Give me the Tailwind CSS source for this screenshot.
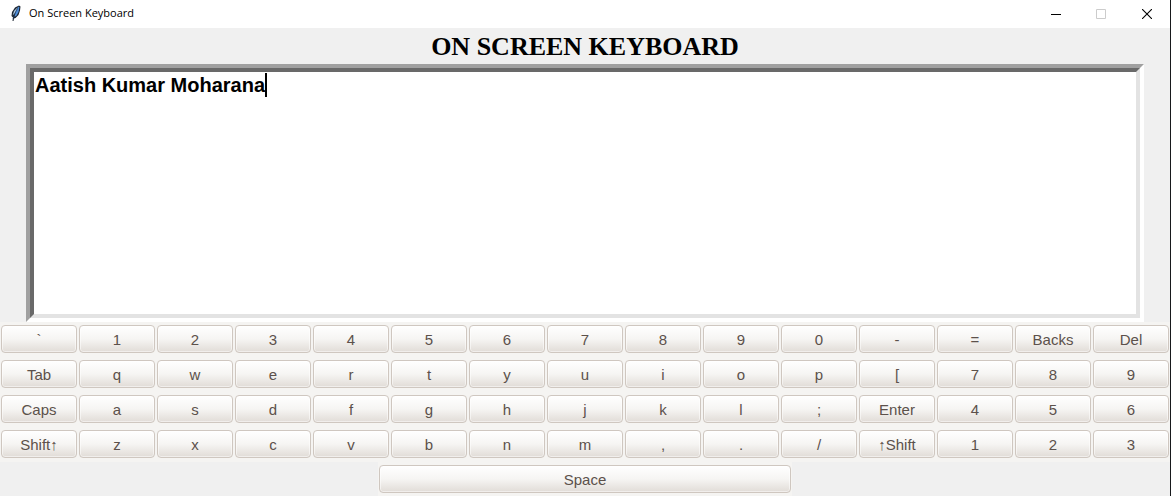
<!DOCTYPE html>
<html lang="en">
<head>
<meta charset="utf-8">
<title>On Screen Keyboard</title>
<script src="https://cdn.jsdelivr.net/npm/@tailwindcss/browser@4"></script>
</head>
<body class="min-h-screen flex flex-col bg-[#f0f0f0] border-r border-[#17191c] font-['Liberation_Sans',sans-serif]">
<header class="h-7 flex items-center justify-between bg-white">
  <div class="flex items-center gap-1.5 pl-[7px] pb-0.5">
    <svg class="w-4 h-4" viewBox="0 0 16 16" aria-hidden="true">
      <path d="M12 .5 13.500 1.500 13 5.500 11.500 10 8.500 13 7 13.500 6.500 16 5.500 16 6 12.500 4.500 11 5 7 8 2.500Z" fill="#1b2430"/>
      <path d="M11.500 1.500 12.300 2.500 11.500 7 9.500 10.500 7.500 12 8.800 6.500Z" fill="#4f8fdc"/>
      <path d="M10.800 2 7 6 5.600 10.500 7.500 8.500Z" fill="#a9c4dc"/>
      <path d="M10.800 3.500 8 8.500 6 14" fill="none" stroke="#24456f" stroke-width=".6"/>
    </svg>
    <h2 class="text-[11px] leading-4 text-black font-['Open_Sans',sans-serif]">On Screen Keyboard</h2>
  </div>
  <div class="flex h-6">
    <button type="button" aria-label="Minimize" class="w-[45px] flex justify-center items-center"><svg class="w-[10px] h-[10px]" viewBox="0 0 10 10"><path d="M0 5.500H10" stroke="#000"/></svg></button>
    <button type="button" aria-label="Maximize" disabled class="w-[45px] flex justify-center items-center"><svg class="w-[10px] h-[10px]" viewBox="0 0 10 10"><path d="M.5.5H9.500V9.500H.5Z" fill="none" stroke="#ccc"/></svg></button>
    <button type="button" aria-label="Close" class="w-[47px] flex justify-center items-center"><svg class="w-[10px] h-[10px]" viewBox="0 0 10 10"><path d="M0 0 10 10M10 0 0 10" stroke="#000" stroke-width="1.100"/></svg></button>
  </div>
</header>
<main class="flex flex-col">
  <h1 class="h-9 text-center text-[26px] leading-[38px] font-bold text-black font-['Liberation_Serif',serif]">ON SCREEN KEYBOARD</h1>
  <div class="mx-[26px] border-4 border-t-[#a0a0a0] border-l-[#a0a0a0] border-r-white border-b-white">
    <div class="relative border-4 border-t-[#696969] border-l-[#696969] border-r-[#e3e3e3] border-b-[#e3e3e3]">
      <textarea aria-label="Typed text" spellcheck="false" class="block w-full h-[242px] resize-none bg-white pl-px pt-px text-[20px] leading-6 font-bold text-black outline-none">Aatish Kumar Moharana</textarea>
      <span class="absolute left-[231px] top-px w-0.5 h-6 bg-black"></span>
    </div>
  </div>
  <div id="keys" class="grid grid-cols-[repeat(15,minmax(0,1fr))] gap-x-0.5 gap-y-[7px] bg-[#f5f4f2] px-px pt-[3px] pb-1"></div>
  <div class="w-[414px] mx-auto bg-[#f5f4f2] px-px pt-[3px] pb-[3px]">
    <button type="button" class="block w-full h-7 rounded-[4px] border border-[#cfc7c0] bg-linear-to-b from-white via-[#f6f5f3] to-[#e1dcd7] shadow-[inset_0_0_0_1px_#ffffff80] pt-0.5 text-[15px] leading-6 text-[#5c514b]">Space</button>
  </div>
</main>
<template id="key"><button type="button" class="h-7 rounded-[4px] border border-[#cfc7c0] bg-linear-to-b from-white via-[#f6f5f3] to-[#e1dcd7] shadow-[inset_0_0_0_1px_#ffffff80] pt-0.5 text-[15px] leading-6 text-[#5c514b]"></button></template>
<script>
const rows = [
  '` 1 2 3 4 5 6 7 8 9 0 - = Backs Del',
  'Tab q w e r t y u i o p [ 7 8 9',
  'Caps a s d f g h j k l ; Enter 4 5 6',
  'Shift↑ z x c v b n m , . / ↑Shift 1 2 3'
];
const grid = document.getElementById('keys');
const template = document.getElementById('key');
for (const label of rows.join(' ').split(' ')) {
  const key = template.content.firstElementChild.cloneNode(true);
  key.textContent = label;
  grid.append(key);
}
</script>
</body>
</html>
